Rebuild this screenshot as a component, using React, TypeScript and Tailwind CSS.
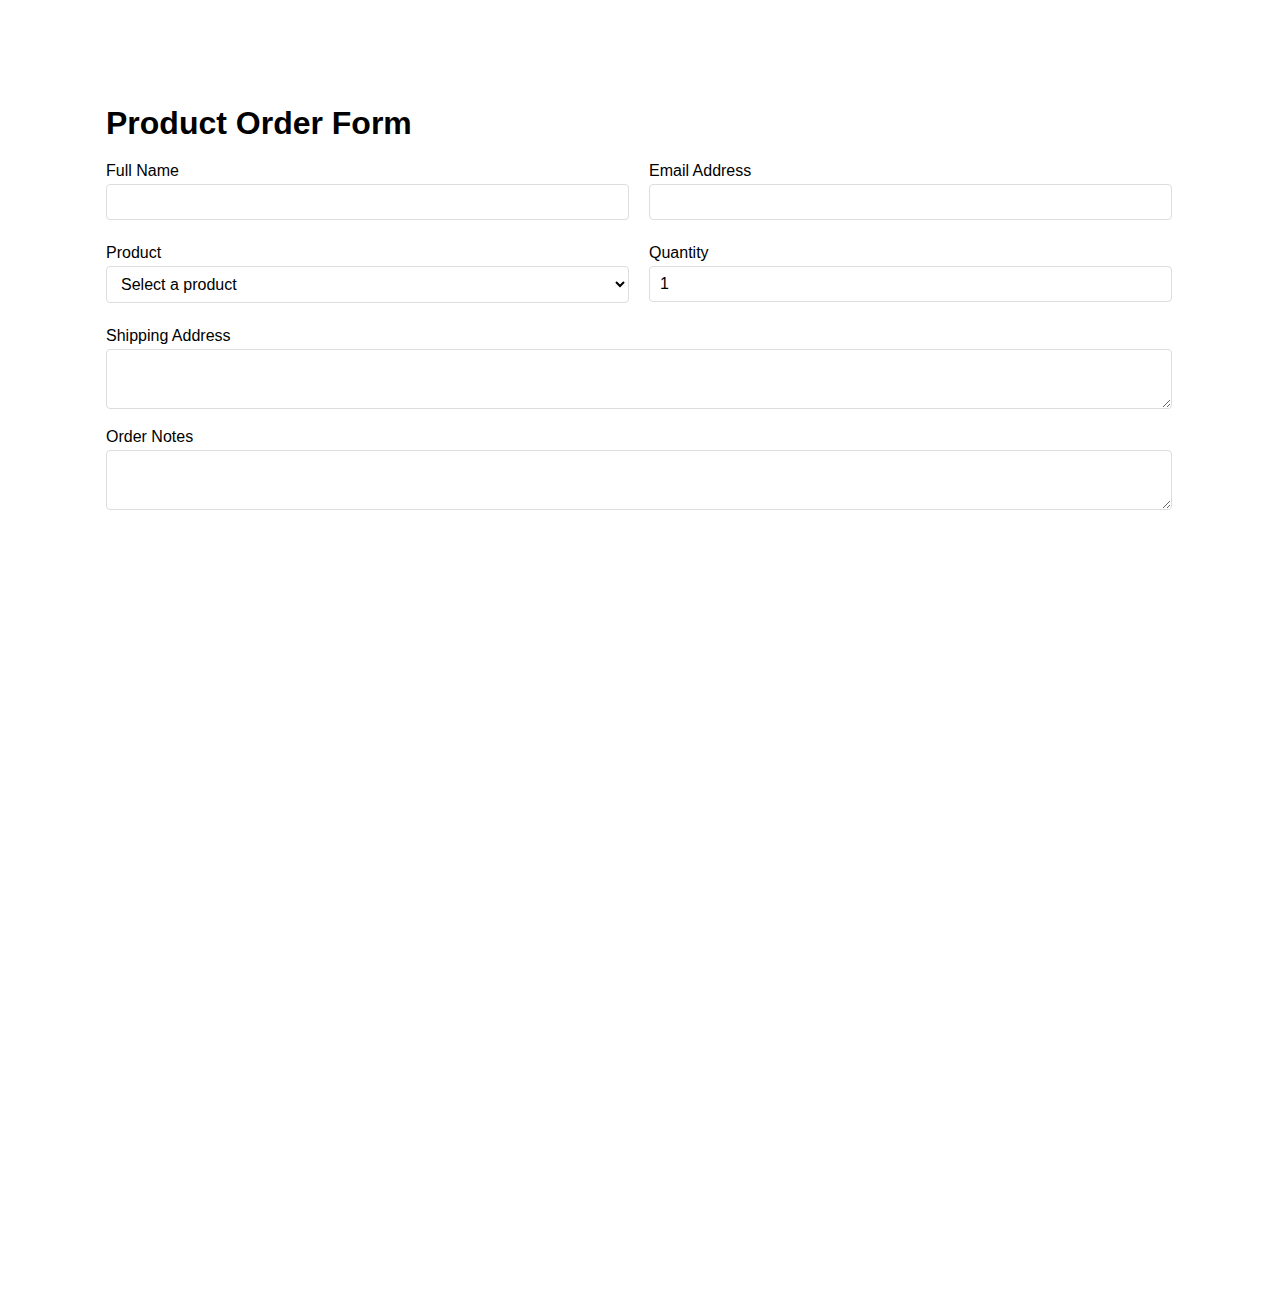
import { useState } from "react";

const fieldClass =
  "block w-full rounded-[4px] border border-[#dddddd] bg-white px-[10px] py-2 text-base leading-[normal] text-black outline-none";

function Label({ htmlFor, children }: { htmlFor: string; children: string }) {
  return (
    <label htmlFor={htmlFor} className="mb-1 block text-base leading-[normal]">
      {children}
    </label>
  );
}

export default function App() {
  const [quantity, setQuantity] = useState("1");

  return (
    <div className="min-h-[1300px] bg-white font-['Liberation_Sans',Arial,sans-serif] text-black">
      <div className="mx-auto w-[1066px] pt-[105px]">
        <h1 className="mb-5 text-[32px] font-bold leading-[normal]">Product Order Form</h1>

        <form onSubmit={(e) => e.preventDefault()}>
          {/* name / email */}
          <div className="mb-6 grid grid-cols-2 gap-x-5">
            <div>
              <Label htmlFor="name">Full Name</Label>
              <input id="name" type="text" className={fieldClass} />
            </div>
            <div>
              <Label htmlFor="email">Email Address</Label>
              <input id="email" type="email" className={fieldClass} />
            </div>
          </div>

          {/* product / quantity */}
          <div className="mb-6 grid grid-cols-2 items-start gap-x-5">
            <div>
              <Label htmlFor="product">Product</Label>
              <select id="product" className={`${fieldClass} h-[37px] py-0`} defaultValue="">
                <option value="">Select a product</option>
                <option value="basic">Basic Plan</option>
                <option value="pro">Pro Plan</option>
                <option value="enterprise">Enterprise Plan</option>
              </select>
            </div>
            <div>
              <Label htmlFor="quantity">Quantity</Label>
              <input
                id="quantity"
                type="number"
                min={1}
                value={quantity}
                onChange={(e) => setQuantity(e.target.value)}
                className={fieldClass}
              />
            </div>
          </div>

          <div className="mb-[19px]">
            <Label htmlFor="address">Shipping Address</Label>
            <textarea id="address" className={`${fieldClass} h-[60px] resize`} />
          </div>

          <div>
            <Label htmlFor="notes">Order Notes</Label>
            <textarea id="notes" className={`${fieldClass} h-[60px] resize`} />
          </div>
        </form>
      </div>
    </div>
  );
}
